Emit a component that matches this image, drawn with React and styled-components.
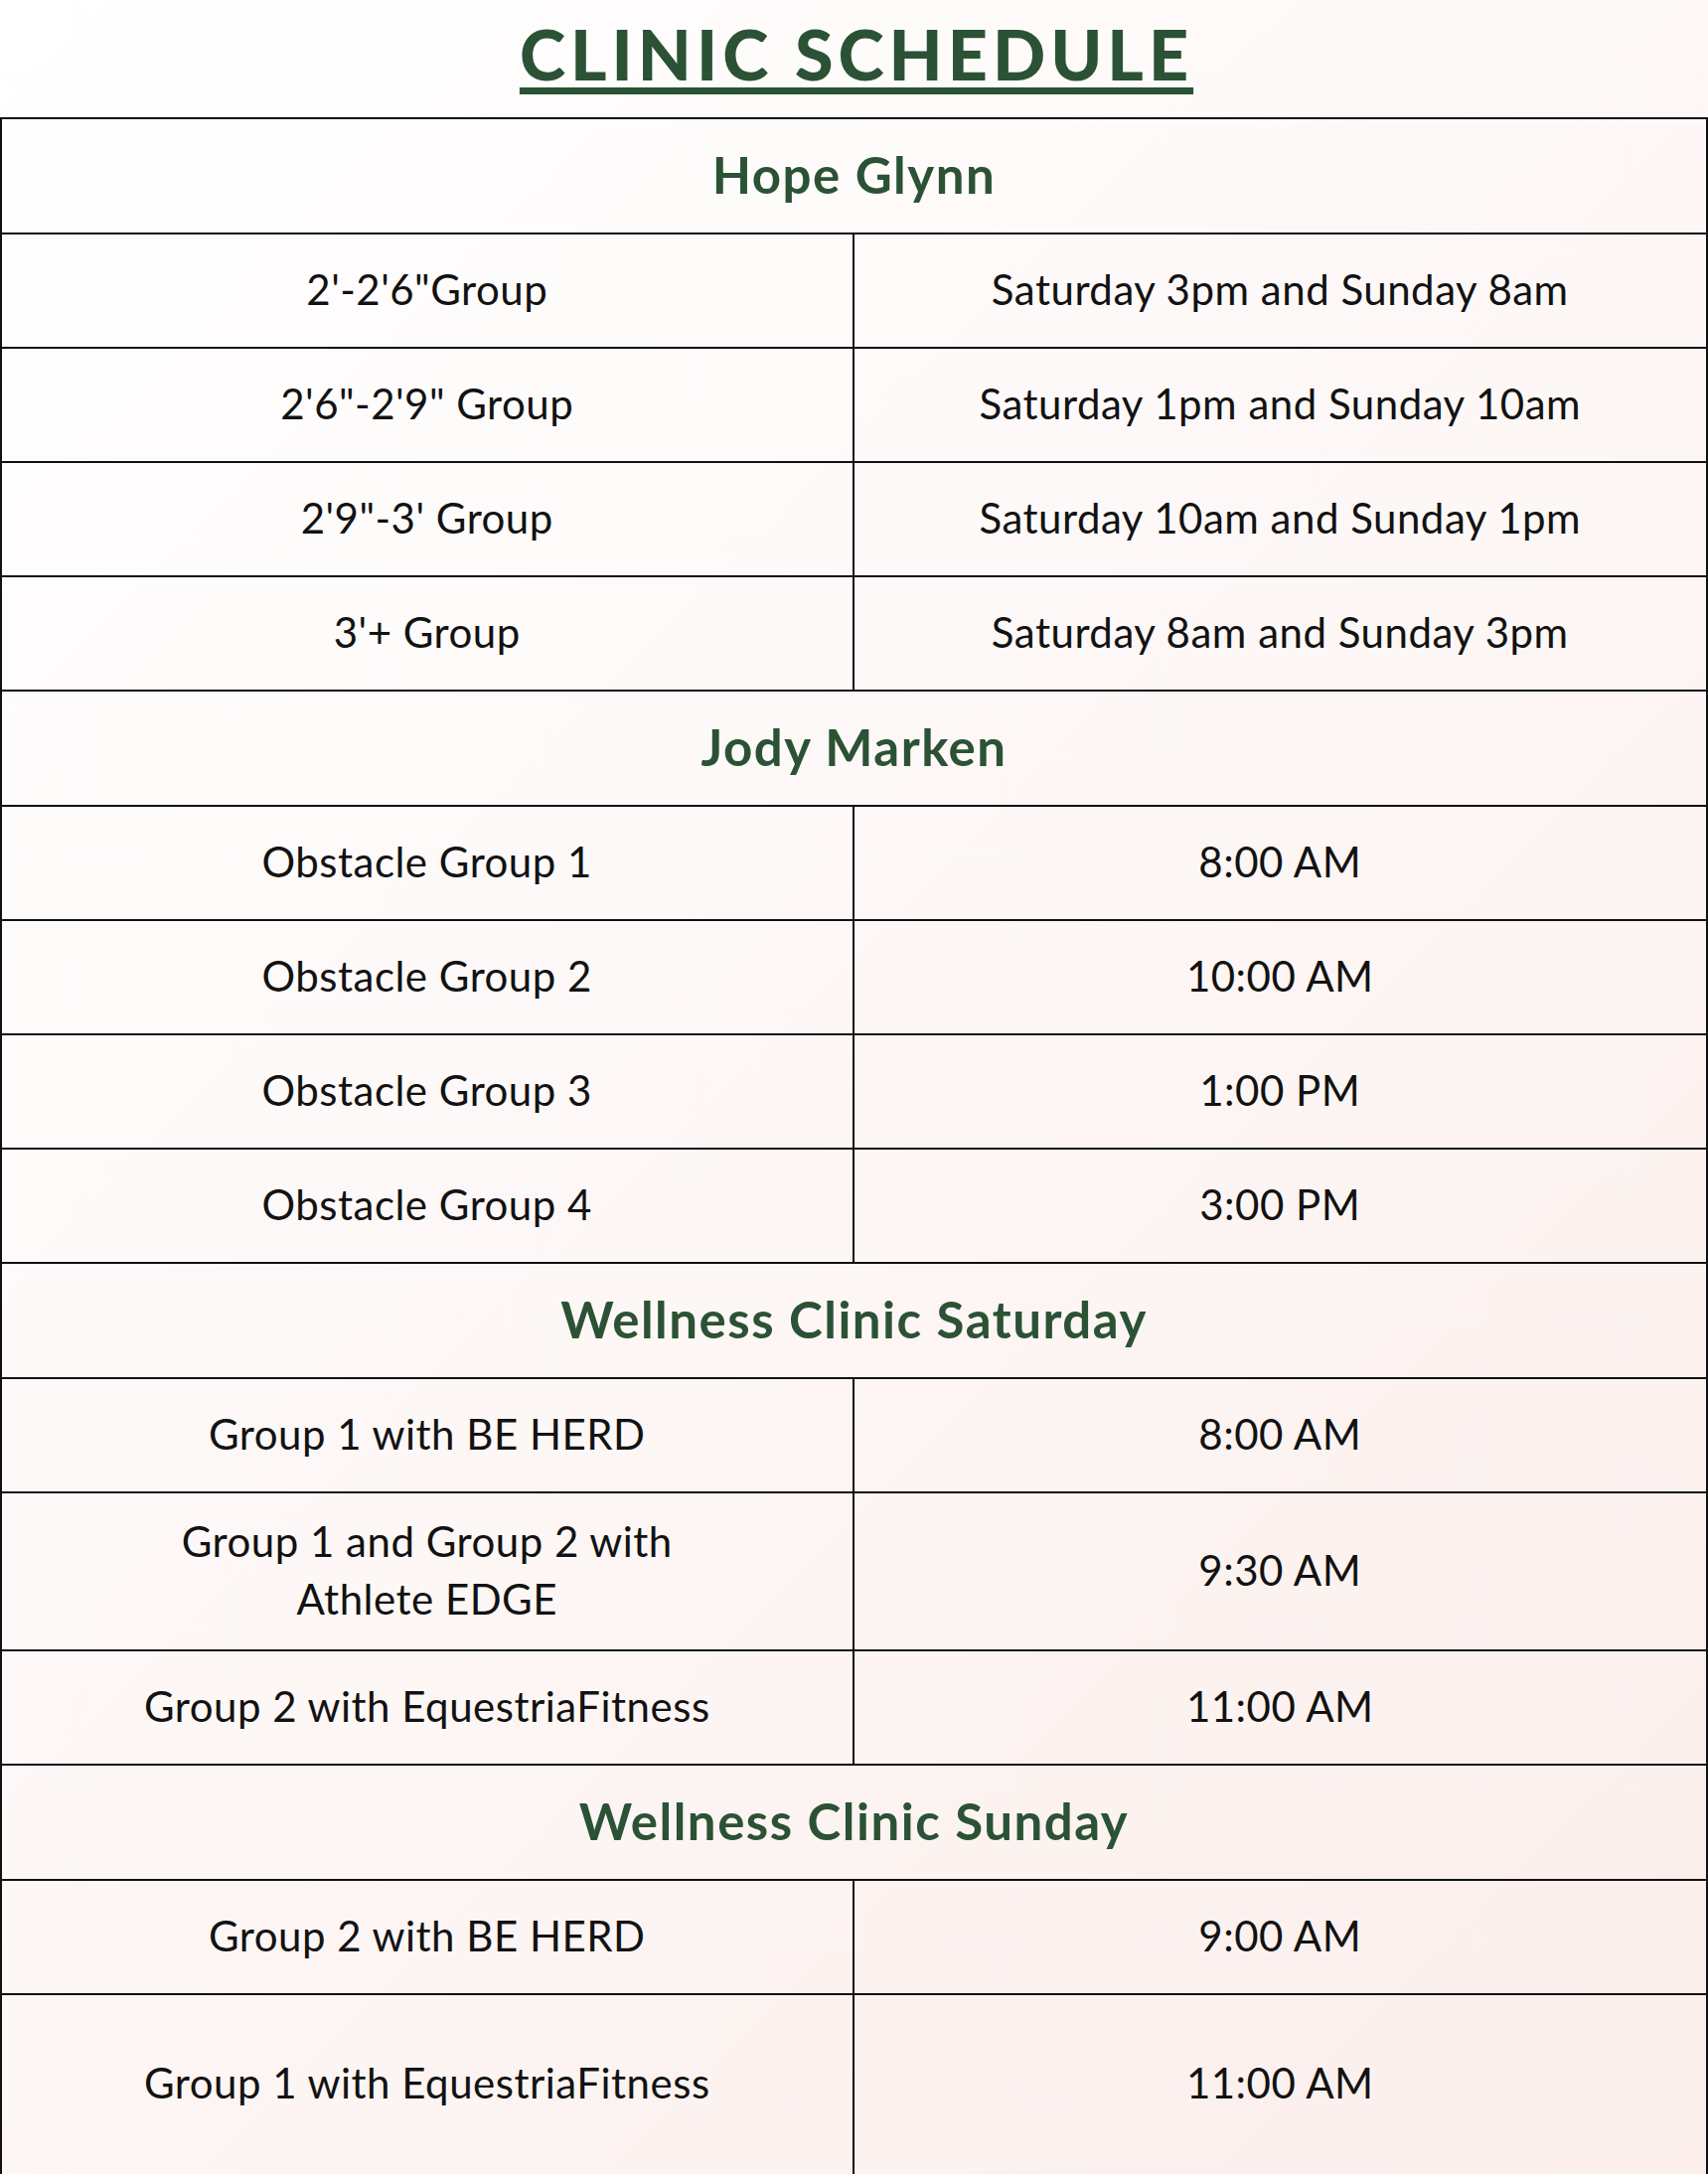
import React from "react";
import styled, { createGlobalStyle } from "styled-components";

const GlobalStyle = createGlobalStyle`
  html, body {
    margin: 0;
    padding: 0;
  }
  body {
    font-family: "Lato", "Liberation Sans", sans-serif;
    color: #121212;
  }
`;

const schedule = [
  {
    title: "Hope Glynn",
    rows: [
      ["2'-2'6\"Group", "Saturday 3pm and Sunday 8am"],
      ["2'6\"-2'9\" Group", "Saturday 1pm and Sunday 10am"],
      ["2'9\"-3' Group", "Saturday 10am and Sunday 1pm"],
      ["3'+ Group", "Saturday 8am and Sunday 3pm"],
    ],
  },
  {
    title: "Jody Marken",
    rows: [
      ["Obstacle Group 1", "8:00 AM"],
      ["Obstacle Group 2", "10:00 AM"],
      ["Obstacle Group 3", "1:00 PM"],
      ["Obstacle Group 4", "3:00 PM"],
    ],
  },
  {
    title: "Wellness Clinic Saturday",
    rows: [
      ["Group 1 with BE HERD", "8:00 AM"],
      ["Group 1 and Group 2 with\nAthlete EDGE", "9:30 AM", 159],
      ["Group 2 with EquestriaFitness", "11:00 AM"],
    ],
  },
  {
    title: "Wellness Clinic Sunday",
    rows: [
      ["Group 2 with BE HERD", "9:00 AM"],
      ["Group 1 with EquestriaFitness", "11:00 AM", 180],
    ],
  },
];

function App() {
  return (
    <Page>
      <GlobalStyle />
      <TitleBar>
        <Title>CLINIC SCHEDULE</Title>
      </TitleBar>
      <Table>
        {schedule.map((section) => (
          <React.Fragment key={section.title}>
            <SectionHeader>{section.title}</SectionHeader>
            {section.rows.map(([group, time, height]) => (
              <Row key={group} $height={height}>
                <Cell $divider>{group}</Cell>
                <Cell>{time}</Cell>
              </Row>
            ))}
          </React.Fragment>
        ))}
      </Table>
    </Page>
  );
}

const Page = styled.div`
  width: 1719px;
  min-height: 2188px;
  box-sizing: border-box;
  background: linear-gradient(135deg, #ffffff 0%, #fdf8f7 45%, #fbeeeb 100%);
  display: flex;
  flex-direction: column;
`;

const TitleBar = styled.div`
  height: 118px;
  display: flex;
  justify-content: center;
  align-items: flex-start;
`;

const Title = styled.h1`
  margin: 14px 0 0;
  font-family: "Lato", sans-serif;
  font-weight: 900;
  font-size: 70px;
  line-height: 80px;
  letter-spacing: 5px;
  margin-right: -5px;
  color: #2c5235;
  text-decoration: underline;
  text-decoration-thickness: 7px;
  text-underline-offset: 7px;
`;

const Table = styled.div`
  border: 2px solid #111;
  display: flex;
  flex-direction: column;
`;

const SectionHeader = styled.div`
  height: 116px;
  box-sizing: border-box;
  border-bottom: 2px solid #111;
  display: flex;
  align-items: center;
  justify-content: center;
  font-weight: 700;
  font-size: 51px;
  letter-spacing: 1.5px;
  color: #2c5235;
  padding-bottom: 4px;
`;

const Row = styled.div`
  display: grid;
  grid-template-columns: 1fr 1fr;
  height: ${(p) => p.$height || 115}px;
  box-sizing: border-box;
  border-bottom: 2px solid #111;
  &:last-child {
    border-bottom: none;
  }
`;

const Cell = styled.div`
  display: flex;
  align-items: center;
  justify-content: center;
  text-align: center;
  white-space: pre-line;
  font-size: 42px;
  line-height: 58px;
  letter-spacing: 0.5px;
  font-weight: 400;
  color: #121212;
  border-right: ${(p) => (p.$divider ? "2px solid #111" : "none")};
  padding: 0 20px 4px;
`;

export default App;
